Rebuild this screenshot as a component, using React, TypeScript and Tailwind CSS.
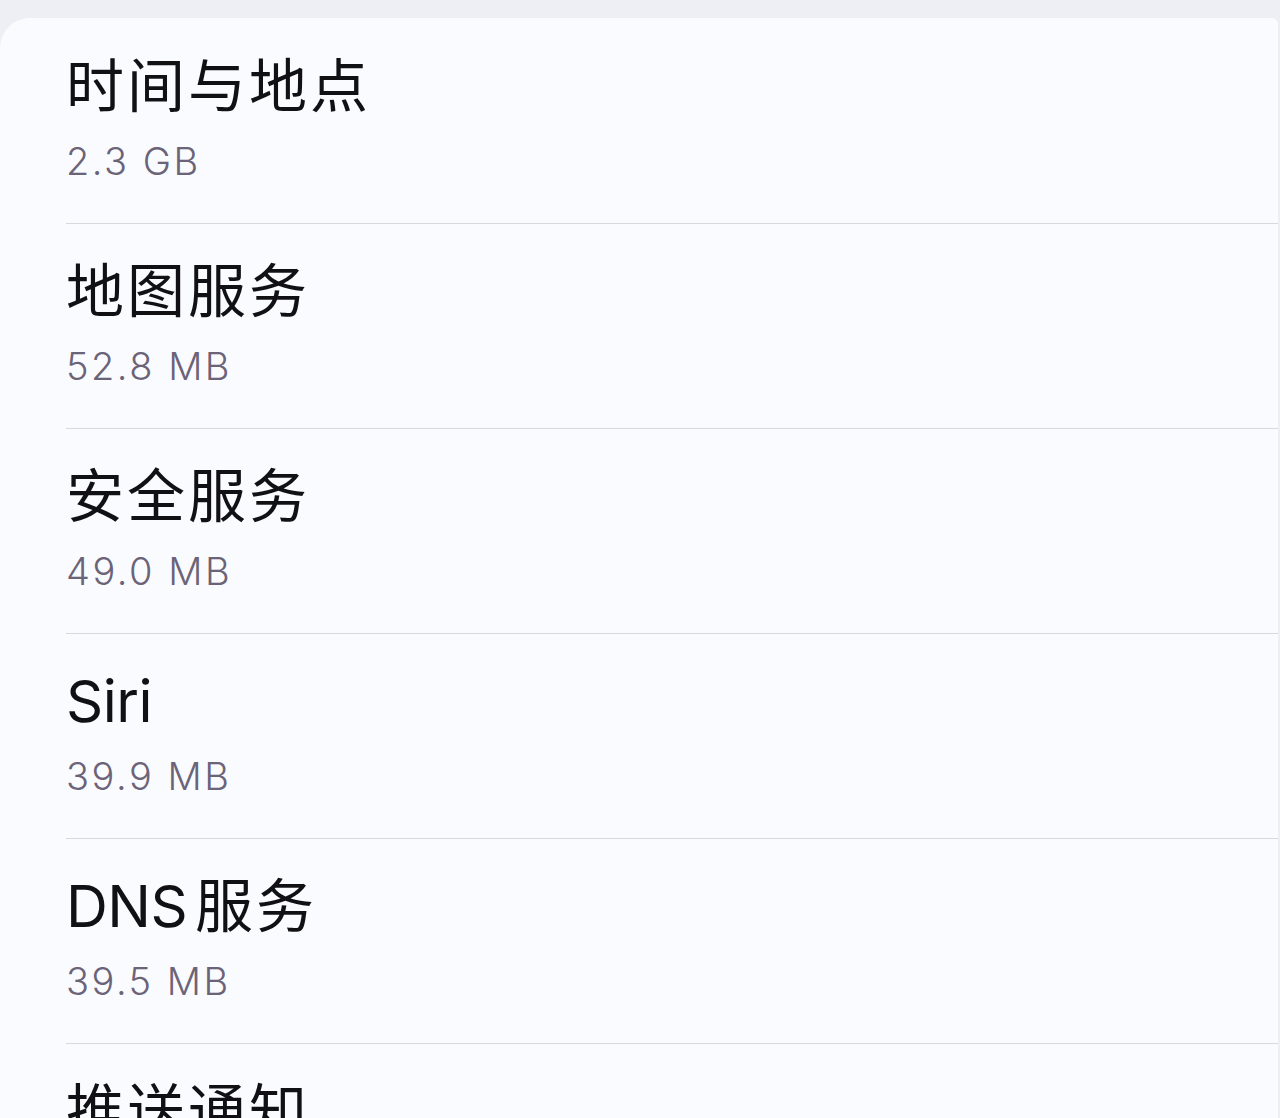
const rows = [
  { title: '时间与地点', size: '2.3 GB' },
  { title: '地图服务', size: '52.8 MB' },
  { title: '安全服务', size: '49.0 MB' },
  { title: 'Siri', size: '39.9 MB' },
  { title: 'DNS 服务', size: '39.5 MB' },
  { title: '推送通知', size: '31.2 MB' },
];

// CJK runs get a little extra spacing, latin runs stay tight
function Title({ text }: { text: string }) {
  const parts = text.split(/([\u4e00-\u9fff]+)/).filter(Boolean);
  return (
    <>
      {parts.map((part, i) =>
        /[\u4e00-\u9fff]/.test(part) ? (
          <span key={i} className="tracking-[3px]">
            {part}
          </span>
        ) : (
          <span key={i} className="tracking-[-0.5px] [word-spacing:-8px]">
            {part}
          </span>
        ),
      )}
    </>
  );
}

export default function App() {
  return (
    <div
      className="h-[1118px] overflow-hidden bg-[#eeeff5] pt-[18px]"
      style={{ fontFamily: 'Inter, "Noto Sans CJK SC", sans-serif' }}
    >
      <div className="mr-[2px] h-full rounded-tl-[30px] rounded-tr-[6px] bg-[#fafbfe] pl-[66px] pt-[1px]">
        {rows.map((row) => (
          <div key={row.title} className="flex h-[205px] flex-col border-b border-[#d6d9df] pt-[34px]">
            <div className="whitespace-nowrap text-[58px] leading-[66px] text-[#111114]">
              <Title text={row.title} />
            </div>
            <div className="mt-[20px] text-[38px] font-light leading-[44px] tracking-[2.5px] text-[#6b6378]">
              {row.size}
            </div>
          </div>
        ))}
      </div>
    </div>
  );
}
